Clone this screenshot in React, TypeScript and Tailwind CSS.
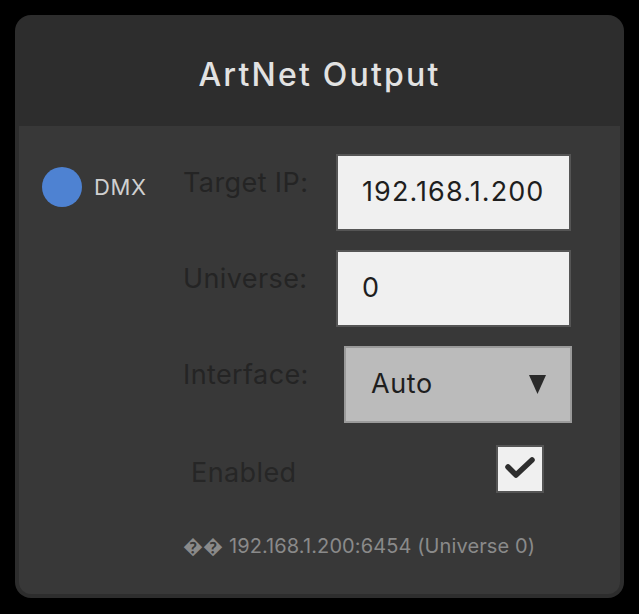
import React from "react";

const font = { fontFamily: "Inter, 'Noto Sans', sans-serif" };

export default function App() {
  return (
    <div className="w-[639px] h-[614px] bg-black p-[15px]" style={font}>
      <div className="w-[609px] h-[583px] rounded-[16px] bg-[#2d2d2d] flex flex-col overflow-hidden">
        <div className="h-[111px] shrink-0 flex items-center justify-center pt-[8px]">
          <span className="text-[32px] font-medium text-[#e2e2e2] tracking-[2.2px]">ArtNet Output</span>
        </div>
        <div className="flex-1 mx-[4px] mb-[4px] bg-[#383838] rounded-b-[12px] flex pl-[23px] pt-[28px]">
          <div className="w-[141px] shrink-0 mt-[13px] flex items-start">
            <div className="flex items-center gap-[12px]">
              <div className="w-[40px] h-[40px] rounded-full bg-[#4e82d2]" />
              <span className="text-[22px] text-[#d0d0d0] tracking-[0.6px]">DMX</span>
            </div>
          </div>
          <div className="flex flex-col">
            <div className="flex items-start">
              <div className="w-[153px] pt-[12px] text-[27px] text-[#242424] leading-[34px] tracking-[0.4px]">Target IP:</div>
              <div className="w-[235px] h-[77px] border-2 border-[#555555] bg-[#f0f0f0] pl-[24px] flex items-center text-[27px] text-[#1e1e1e] tracking-[1.1px]">
                192.168.1.200
              </div>
            </div>
            <div className="flex items-start mt-[19px]">
              <div className="w-[153px] pt-[12px] text-[27px] text-[#242424] leading-[34px] tracking-[0.4px]">Universe:</div>
              <div className="w-[235px] h-[77px] border-2 border-[#555555] bg-[#f0f0f0] pl-[24px] flex items-center text-[27px] text-[#1e1e1e]">
                0
              </div>
            </div>
            <div className="flex items-start mt-[19px]">
              <div className="w-[161px] pt-[12px] text-[27px] text-[#242424] leading-[34px] tracking-[0.4px]">Interface:</div>
              <div className="w-[228px] h-[77px] border-2 border-[#9a9a9a] bg-[#bbbbbb] pl-[25px] pr-[24px] flex items-center justify-between text-[27px] text-[#1e1e1e] tracking-[0.6px]">
                <span>Auto</span>
                <svg width="17" height="19" viewBox="0 0 17 19">
                  <polygon points="0,0 17,0 8.5,19" fill="#2a2a2a" />
                </svg>
              </div>
            </div>
            <div className="flex items-start mt-[22px]">
              <div className="w-[313px] pl-[8px] pt-[11px] text-[27px] text-[#262626] leading-[34px] tracking-[0.4px]">Enabled</div>
              <div className="w-[48px] h-[48px] border-2 border-[#555555] bg-[#f0f0f0] flex items-center justify-center">
                <svg width="34" height="26" viewBox="0 0 34 26">
                  <polyline points="5,11 13,19 29,4" fill="none" stroke="#2e2e2e" strokeWidth="5.5" strokeLinecap="round" strokeLinejoin="round" />
                </svg>
              </div>
            </div>
            <div className="mt-[41px] text-[20px] text-[#8a8a8a] leading-[24px] tracking-[0.1px]">�� 192.168.1.200:6454 (Universe 0)</div>
          </div>
        </div>
      </div>
    </div>
  );
}
